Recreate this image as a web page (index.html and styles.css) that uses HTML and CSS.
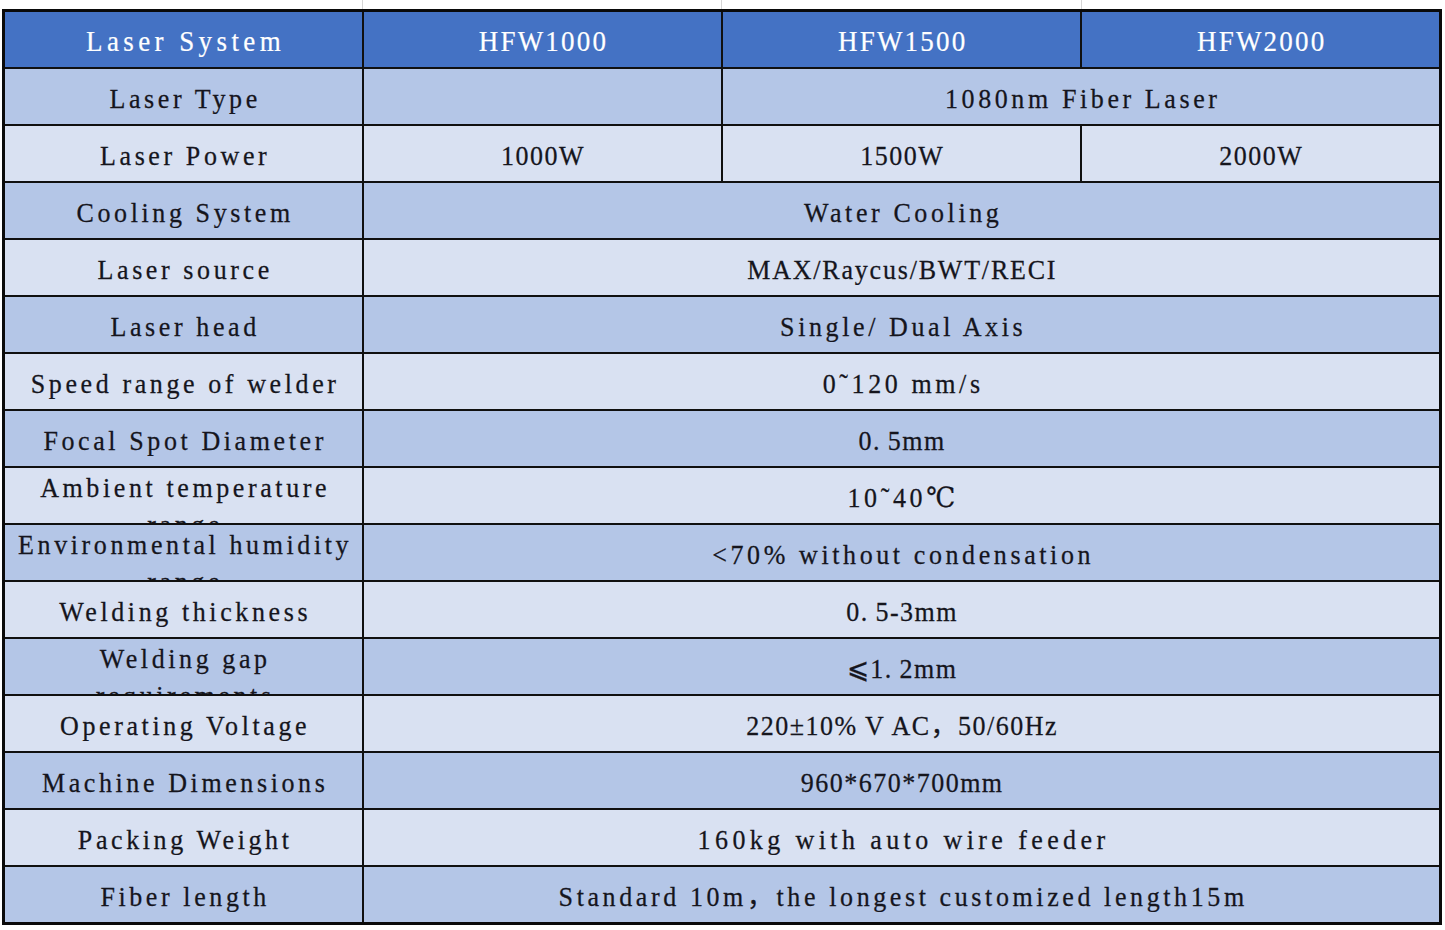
FILE: index.html
```html
<!DOCTYPE html>
<html>
<head>
<meta charset="utf-8">
<title>Laser Welder Specifications</title>
<link rel="stylesheet" href="styles.css">
</head>
<body>
<div class="sheet">
  <div class="gridstrip"><span class="g1"></span><span class="g2"></span><span class="g3"></span><span class="g4"></span></div>
  <table class="spec">
    <colgroup><col class="col"><col class="col"><col class="col"><col class="col"></colgroup>
    <thead>
      <tr class="head">
        <th><div class="c"><span class="t">Laser System</span></div></th>
        <th><div class="c"><span class="t num">HFW1000</span></div></th>
        <th><div class="c"><span class="t num">HFW1500</span></div></th>
        <th><div class="c"><span class="t num">HFW2000</span></div></th>
      </tr>
    </thead>
    <tbody>
      <tr class="dark">
        <td><div class="c"><span class="t">Laser Type</span></div></td>
        <td><div class="c"></div></td>
        <td colspan="2"><div class="c"><span class="t">1080nm Fiber Laser</span></div></td>
      </tr>
      <tr class="light">
        <td><div class="c"><span class="t">Laser Power</span></div></td>
        <td><div class="c"><span class="t num">1000W</span></div></td>
        <td><div class="c"><span class="t num">1500W</span></div></td>
        <td><div class="c"><span class="t num">2000W</span></div></td>
      </tr>
      <tr class="dark">
        <td><div class="c"><span class="t">Cooling System</span></div></td>
        <td colspan="3"><div class="c"><span class="t">Water Cooling</span></div></td>
      </tr>
      <tr class="light">
        <td><div class="c"><span class="t">Laser source</span></div></td>
        <td colspan="3"><div class="c"><span class="t caps">MAX/Raycus/BWT/RECI</span></div></td>
      </tr>
      <tr class="dark">
        <td><div class="c"><span class="t">Laser head</span></div></td>
        <td colspan="3"><div class="c"><span class="t">Single/ Dual Axis</span></div></td>
      </tr>
      <tr class="light">
        <td><div class="c"><span class="t">Speed range of welder</span></div></td>
        <td colspan="3"><div class="c"><span class="t">0˜120 mm/s</span></div></td>
      </tr>
      <tr class="dark">
        <td><div class="c"><span class="t">Focal Spot Diameter</span></div></td>
        <td colspan="3"><div class="c"><span class="t num">0.&thinsp;5mm</span></div></td>
      </tr>
      <tr class="light">
        <td><div class="c wrap"><span class="t">Ambient temperature<br>range</span></div></td>
        <td colspan="3"><div class="c"><span class="t">10˜40℃</span></div></td>
      </tr>
      <tr class="dark">
        <td><div class="c wrap"><span class="t">Environmental humidity<br>range</span></div></td>
        <td colspan="3"><div class="c"><span class="t">&lt;70% without condensation</span></div></td>
      </tr>
      <tr class="light">
        <td><div class="c"><span class="t">Welding thickness</span></div></td>
        <td colspan="3"><div class="c"><span class="t num">0.&thinsp;5-3mm</span></div></td>
      </tr>
      <tr class="dark">
        <td><div class="c wrap"><span class="t">Welding gap<br>requirements</span></div></td>
        <td colspan="3"><div class="c"><span class="t num">⩽1.&thinsp;2mm</span></div></td>
      </tr>
      <tr class="light">
        <td><div class="c"><span class="t">Operating Voltage</span></div></td>
        <td colspan="3"><div class="c"><span class="t num">220±10% V AC，50/60Hz</span></div></td>
      </tr>
      <tr class="dark">
        <td><div class="c"><span class="t">Machine Dimensions</span></div></td>
        <td colspan="3"><div class="c"><span class="t num">960*670*700mm</span></div></td>
      </tr>
      <tr class="light">
        <td><div class="c"><span class="t">Packing Weight</span></div></td>
        <td colspan="3"><div class="c"><span class="t wide">160kg with auto wire feeder</span></div></td>
      </tr>
      <tr class="dark">
        <td><div class="c"><span class="t">Fiber length</span></div></td>
        <td colspan="3"><div class="c"><span class="t">Standard 10m，the longest customized length15m</span></div></td>
      </tr>
    </tbody>
  </table>
</div>
</body>
</html>
```

FILE: styles.css
```css
html, body {
  margin: 0;
  padding: 0;
  background: #ffffff;
}

.sheet {
  padding-left: 2px;
  font-family: "Liberation Serif", "DejaVu Serif", "Noto Sans CJK SC", serif;
  color: #15151d;
}

.gridstrip {
  display: flex;
  height: 9px;
}

.gridstrip span {
  display: block;
  height: 9px;
  border-right: 1px solid #d6d6d6;
  box-sizing: border-box;
}

.gridstrip .g1 { width: 361px; }
.gridstrip .g2 { width: 359px; }
.gridstrip .g3 { width: 360px; }
.gridstrip .g4 { width: 0; border-right: none; }

.spec {
  width: 1440px;
  table-layout: fixed;
  border-collapse: collapse;
  border: 3px solid #0a0a0a;
}

.spec .col {
  width: 25%;
}

.spec th,
.spec td {
  padding: 0;
  border: 2px solid #101010;
  font-weight: normal;
}

.c {
  height: 55px;
  overflow: hidden;
  display: flex;
  align-items: center;
  justify-content: center;
  text-align: center;
  padding: 0 2px;
  box-sizing: border-box;
}

.t {
  display: inline-block;
  font-size: 26px;
  letter-spacing: 3.6px;
  line-height: 30px;
  padding-top: 5px;
  padding-left: 3.6px;
  transform: scaleY(1.06);
  white-space: nowrap;
  -webkit-text-stroke: 0.25px currentColor;
}

.t.num {
  letter-spacing: 1.5px;
  padding-left: 1.5px;
}

.t.caps {
  letter-spacing: 1.8px;
  padding-left: 1.8px;
}

.t.wide {
  letter-spacing: 4.4px;
  padding-left: 4.4px;
}

.wrap {
  align-items: flex-start;
}

.wrap .t {
  line-height: 35px;
  padding-top: 1px;
  transform-origin: 50% 0;
}

.head th {
  background: #4472c4;
  color: #ffffff;
}

.head .t {
  font-size: 27px;
  letter-spacing: 4.4px;
  padding-left: 4.4px;
  padding-top: 3px;
  -webkit-text-stroke: 0.2px currentColor;
}

.head .t.num {
  letter-spacing: 2.2px;
  padding-left: 2.2px;
}

.dark td {
  background: #b4c6e7;
}

.light td {
  background: #d9e1f2;
}
```
